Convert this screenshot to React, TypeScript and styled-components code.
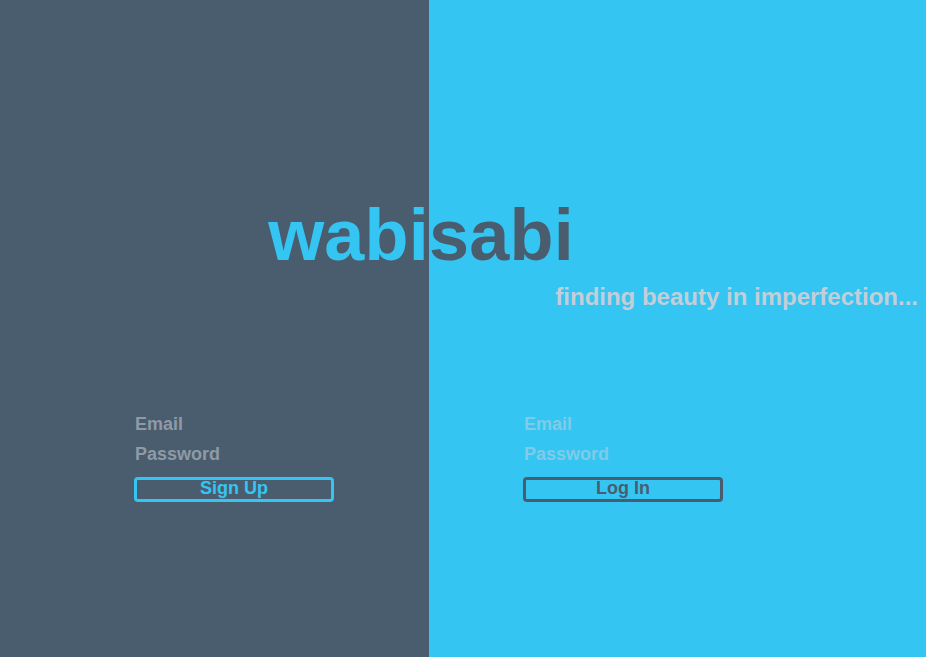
import React from "react";
import styled, { createGlobalStyle } from "styled-components";

const SLATE = "#4a5d6e";
const CYAN = "#35c5f3";

const Global = createGlobalStyle`
  html, body { margin: 0; padding: 0; height: 100%; }
  body { font-family: "Liberation Sans", Arial, Helvetica, sans-serif; overflow: hidden; }
  #root { height: 100%; }
`;

const Page = styled.div`
  display: flex;
  height: 100vh;
  width: 100%;
`;

const Column = styled.section<{ $dark: boolean }>`
  display: flex;
  flex-direction: column;
  box-sizing: border-box;
  background: ${(p) => (p.$dark ? SLATE : CYAN)};
  ${(p) => (p.$dark ? "width: 429px; flex: none;" : "flex: 1;")}
  padding-top: 199px;
`;

const Word = styled.h1<{ $dark: boolean }>`
  margin: 0;
  font-size: 72px;
  line-height: 72px;
  font-weight: 700;
  letter-spacing: 0.2px;
  color: ${(p) => (p.$dark ? CYAN : SLATE)};
  text-align: ${(p) => (p.$dark ? "right" : "left")};
`;

const Tagline = styled.p`
  margin: 14px 0 0;
  padding-right: 8px;
  font-size: 24px;
  line-height: 24px;
  font-weight: 700;
  color: #c3ced8;
  text-align: right;
  white-space: nowrap;
`;

const Form = styled.form<{ $top: number; $left: number }>`
  display: flex;
  flex-direction: column;
  width: 200px;
  margin-top: ${(p) => p.$top}px;
  margin-left: ${(p) => p.$left}px;
`;

const Field = styled.input<{ $dark: boolean }>`
  display: block;
  box-sizing: border-box;
  width: 200px;
  height: 22px;
  margin: 0 0 8px;
  padding: 0 0 0 1px;
  border: none;
  outline: none;
  background: transparent;
  font-family: inherit;
  font-size: 18px;
  line-height: 22px;
  font-weight: 700;
  color: ${(p) => (p.$dark ? "#d5dde4" : SLATE)};
  &::placeholder {
    color: ${(p) => (p.$dark ? "#8e9aa7" : "#80cbe7")};
    opacity: 1;
  }
`;

const Button = styled.button<{ $dark: boolean }>`
  box-sizing: border-box;
  width: 200px;
  height: 25px;
  margin-top: 4px;
  padding: 0 0 2px;
  border: 3px solid ${(p) => (p.$dark ? CYAN : SLATE)};
  border-radius: 4px;
  background: transparent;
  font-family: inherit;
  font-size: 18px;
  line-height: 17px;
  font-weight: 700;
  color: ${(p) => (p.$dark ? CYAN : SLATE)};
  cursor: pointer;
`;

export default function App() {
  return (
    <>
      <Global />
      <Page>
        <Column $dark>
          <Word $dark>wabi</Word>
          <Form $top={142} $left={134} onSubmit={(e) => e.preventDefault()}>
            <Field $dark type="email" placeholder="Email" />
            <Field $dark type="password" placeholder="Password" />
            <Button $dark type="submit">Sign Up</Button>
          </Form>
        </Column>
        <Column $dark={false}>
          <Word $dark={false}>sabi</Word>
          <Tagline>finding beauty in imperfection...</Tagline>
          <Form $top={104} $left={94} onSubmit={(e) => e.preventDefault()}>
            <Field $dark={false} type="email" placeholder="Email" />
            <Field $dark={false} type="password" placeholder="Password" />
            <Button $dark={false} type="submit">Log In</Button>
          </Form>
        </Column>
      </Page>
    </>
  );
}
